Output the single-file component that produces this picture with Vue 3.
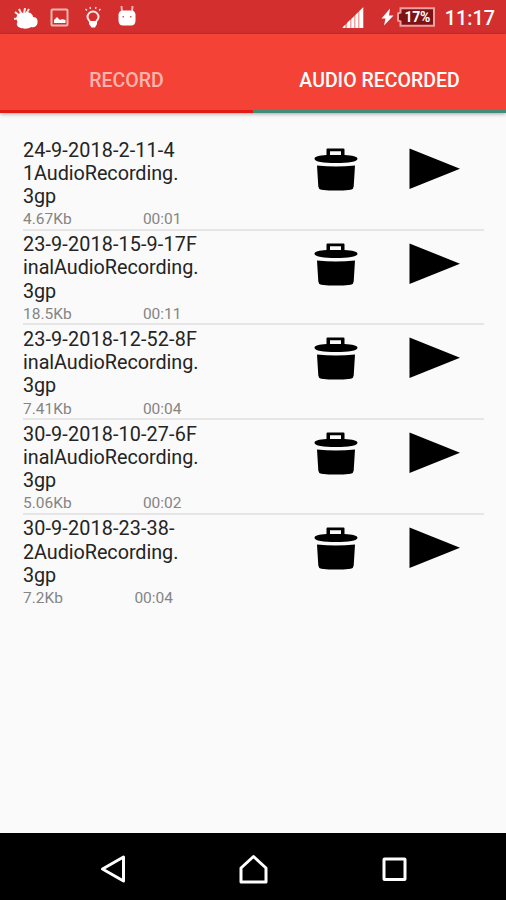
<template>
  <div class="screen">
    <header class="status-bar">
      <div class="notifications">
        <svg class="weather" width="26" height="24" viewBox="0 0 26 24">
          <path d="M2 4l5 4M6 1l3 6M12 0l-1 6M16 1l-3 5M1 11l6-1" />
          <path class="fill" d="M8 20c-4-1-5-4-3.500-6-3-6 1-10 6.500-9 5-2 9 1 9 4 4 0 5 3 4.500 6s-3 5-6.500 4c-2 2-8 2-10 1z" />
        </svg>
        <svg class="image" width="20" height="20" viewBox="0 0 20 20">
          <rect x="1.500" y="1.500" width="16" height="16" rx="1" />
          <path class="fill" d="M4 15v-3l3-3 3 3 2-1 3.500 1v3z" />
        </svg>
        <svg class="bulb" width="18" height="24" viewBox="0 0 18 24">
          <path d="M6.500 17c0-2-3-3-3-6a5.500 5.500 0 0 1 11 0c0 3-3 4-3 6z" />
          <path class="fill" d="M5 15h8v3l-2 3.500H7.500L5 18z" />
          <path class="ray" d="M3 4.500L1.500 3M6.500 3L6 1M11.500 3l.5-2M15 4.500L16.500 3" />
        </svg>
        <svg class="robot" width="20" height="22" viewBox="0 0 20 22">
          <path d="M4.500 1l.5 6M15.500 1L15 7" />
          <path class="fill" d="M5 5.500h10q3 .5 3.500 4v6.500q-.5 4.500-4.500 4.500H6q-4 0-4.500-4.500V9.500Q2 6 5 5.500z" />
          <path class="eye" d="M5.500 11h1.500v1.500H5.500zM13 11h1.500v1.500H13z" />
        </svg>
      </div>
      <div class="system">
        <svg class="signal" width="22" height="22" viewBox="0 0 22 22">
          <path class="shade" d="M0 21L21.500 0v21z" />
          <path class="fill" d="M1 21v-1l2-2v3zM5 21v-5l3-3v8zM9.500 21v-9l2.500-2.500V21zM13.500 21V8L16 5.500V21zM17.500 21V4l3.500-3.500V21z" />
        </svg>
        <svg class="bolt" width="13" height="18" viewBox="0 0 13 18">
          <path class="fill" d="M9 .500L.5 10.500h4L3 17.500 12.500 7.500H8z" />
        </svg>
        <div class="battery">
          <svg width="40" height="20" viewBox="0 0 40 20">
            <path d="M5.500 1.200H39v17.600H5.500V14.500L3 13.500v-7l2.500-1z" />
          </svg>
          <span>17%</span>
        </div>
        <span class="clock">11:17</span>
      </div>
    </header>

    <nav class="tabs">
      <button
        v-for="tab in tabs"
        :key="tab"
        class="tab"
        :class="{ active: tab === activeTab }"
        @click="activeTab = tab"
      >
        <span>{{ tab }}</span>
      </button>
    </nav>

    <main class="recording-list">
      <div v-for="recording in recordings" :key="recording.id" class="recording">
        <div class="recording-info">
          <div v-for="line in recording.name" :key="line" class="name-line">{{ line }}</div>
          <div class="details" :class="{ short: recording.size.length < 6 }">
            <span>{{ recording.size }}</span>
            <span>{{ recording.duration }}</span>
          </div>
        </div>
        <button class="delete-btn" aria-label="Delete">
          <svg width="44" height="44" viewBox="0 0 44 44">
            <path d="M12.500 7V1.500Q12.500.5 13.500.5h16q1 0 1 1V7c8 .4 13 1.700 13 3.700 0 3-9 4.300-21.500 4.300S.5 13.700.5 10.700C.5 8.700 5 7.400 12.500 7zm3.500-3.700V7h11V3.300z" fill-rule="evenodd" />
            <path d="M3 17.500q19 1.800 38 0L39.700 38.500q-.2 2.700-3 3.200-14.700 1.800-29.400 0-2.800-.5-3-3.200z" />
          </svg>
        </button>
        <button class="play-btn" aria-label="Play">
          <svg width="52" height="42" viewBox="0 0 52 42">
            <path d="M.5.500L51 20.700 .5 41z" />
          </svg>
        </button>
      </div>
    </main>

    <footer class="nav-bar">
      <svg width="28" height="30" viewBox="0 0 28 30">
        <path d="M24.500 3v24L3.500 15z" />
      </svg>
      <svg width="30" height="30" viewBox="0 0 30 30">
        <path d="M14.500 2.500L27 14v14H2V14z" />
      </svg>
      <svg width="26" height="30" viewBox="0 0 26 30">
        <rect x="3" y="5" width="21" height="20.500" rx=".5" />
      </svg>
    </footer>
  </div>
</template>

<script setup>
import { ref } from 'vue';

const tabs = ['RECORD', 'AUDIO RECORDED'];
const activeTab = ref('AUDIO RECORDED');

const recordings = [
  { id: 1, name: ['24-9-2018-2-11-4', '1AudioRecording.', '3gp'], size: '4.67Kb', duration: '00:01' },
  { id: 2, name: ['23-9-2018-15-9-17F', 'inalAudioRecording.', '3gp'], size: '18.5Kb', duration: '00:11' },
  { id: 3, name: ['23-9-2018-12-52-8F', 'inalAudioRecording.', '3gp'], size: '7.41Kb', duration: '00:04' },
  { id: 4, name: ['30-9-2018-10-27-6F', 'inalAudioRecording.', '3gp'], size: '5.06Kb', duration: '00:02' },
  { id: 5, name: ['30-9-2018-23-38-', '2AudioRecording.', '3gp'], size: '7.2Kb', duration: '00:04' }
];
</script>

<style>
body {
  margin: 0;
}
</style>

<style scoped>
.screen {
  display: flex;
  flex-direction: column;
  width: 506px;
  height: 900px;
  overflow: hidden;
  background: #fafafa;
  font-family: Roboto, "Liberation Sans", sans-serif;
}

button {
  padding: 0;
  border: none;
  background: none;
  font-family: inherit;
  cursor: pointer;
}

svg {
  display: block;
  flex: none;
}

.status-bar {
  display: flex;
  justify-content: space-between;
  height: 34px;
  box-sizing: border-box;
  padding: 0 11px 0 13px;
  background: #d32f2f;
  color: #fff;
}

.status-bar path,
.status-bar rect {
  fill: none;
  stroke: #ffe9e7;
  stroke-width: 2;
}

.status-bar .fill {
  fill: #fff;
  stroke: none;
}

.status-bar .shade {
  fill: #f3a4a1;
  stroke: none;
}

.status-bar .eye {
  fill: #d85a58;
  stroke: none;
}

.status-bar .ray {
  stroke-width: 1.3;
}

.notifications {
  display: flex;
  align-items: flex-start;
}

.weather {
  margin-top: 8px;
}

.image {
  margin: 8px 0 0 11px;
}

.image rect {
  stroke: #f6b5b2;
}

.bulb {
  margin: 6px 0 0 14px;
}

.robot {
  margin: 5px 0 0 15px;
}

.robot path:first-child {
  stroke: #f6b5b2;
}

.system {
  display: flex;
  align-items: center;
}

.signal {
  margin: 2px 17px 0 0;
}

.bolt {
  margin-right: 1px;
}

.battery {
  display: grid;
  margin-right: 10px;
}

.battery svg,
.battery span {
  grid-area: 1 / 1;
}

.battery path {
  fill: #7e1214;
  stroke: #eea19f;
}

.battery span {
  padding-left: 5px;
  font-size: 14px;
  font-weight: 700;
  letter-spacing: -0.3px;
  line-height: 20px;
  text-align: center;
  z-index: 1;
}

.clock {
  padding-top: 3px;
  font-size: 19.8px;
  font-weight: 500;
  line-height: 34px;
}

.tabs {
  display: flex;
  flex: none;
  height: 79px;
  background: #f44336;
  box-shadow: 0 1px 4px rgba(0, 0, 0, 0.35);
}

.tab {
  width: 50%;
  padding-top: 17px;
  box-sizing: border-box;
  border-bottom: 3px solid #e01b16;
  color: #fcb5ae;
  font-size: 19.5px;
  font-weight: 500;
}

.tab.active {
  border-bottom-color: #448a7a;
  color: #fff;
}

.recording-list {
  flex: 1;
  padding: 23px 22px 0 23px;
}

.recording {
  display: flex;
  height: 94.7px;
  box-sizing: border-box;
  border-bottom: 2px solid #e6e6e6;
}

.recording:last-child {
  border-bottom: none;
}

.recording-info {
  width: 291px;
  padding-top: 2.6px;
}

.name-line {
  color: #242424;
  font-size: 19.8px;
  letter-spacing: -0.05px;
  line-height: 23.2px;
}

.name-line:first-child {
  letter-spacing: 0.13px;
}

.details {
  display: flex;
  justify-content: space-between;
  width: 158.5px;
  margin-top: 2px;
  color: #858585;
  font-size: 15.5px;
  line-height: 18px;
}

.details.short {
  width: 150px;
}

.delete-btn {
  height: 44px;
  margin-top: 12px;
}

.play-btn {
  height: 42px;
  margin: 12px 0 0 51px;
}

.nav-bar {
  display: flex;
  justify-content: space-between;
  height: 67px;
  box-sizing: border-box;
  padding: 21px 99px 0 99px;
  background: #000;
}

.nav-bar path,
.nav-bar rect {
  fill: none;
  stroke: #fff;
  stroke-width: 3;
  stroke-linejoin: round;
}
</style>
